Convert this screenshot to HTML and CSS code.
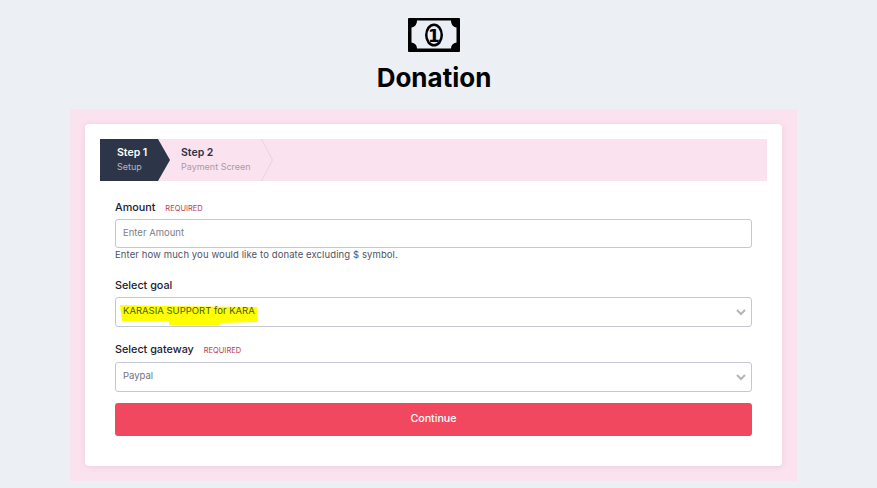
FILE: index.html
```html
<!DOCTYPE html>
<html lang="en">
<head>
    <meta charset="UTF-8">
    <title>Donation</title>
    <link rel="stylesheet" href="styles.css">
</head>
<body>
    <header class="page-head">
        <svg class="bill" viewBox="0 0 52 34" width="52" height="34" aria-hidden="true">
            <rect width="52" height="34" rx="1" fill="#000"/>
            <path d="M9 2.5H43C43 6 45 9 48.5 9.5V24.5C45 25 43 27 43 30.5H9C9 27 7 25 3.5 24.5V9.5C7 9 9 6 9 2.5Z" fill="#ebeef4"/>
            <ellipse cx="26" cy="17" rx="9" ry="11.5" fill="#000"/>
            <ellipse cx="26" cy="17" rx="6.5" ry="9" fill="#ebeef4"/>
            <text x="26" y="23.5" text-anchor="middle" class="bill-num">1</text>
        </svg>
        <h1>Donation</h1>
    </header>

    <main class="panel">
        <div class="card">
            <!-- Steps -->
            <div class="steps">
                <div class="step step-active">
                    <strong>Step 1</strong>
                    <span>Setup</span>
                </div>
                <div class="step">
                    <strong>Step 2</strong>
                    <span>Payment Screen</span>
                    <svg class="step-arrow" viewBox="0 0 12 42" width="12" height="42" aria-hidden="true">
                        <path d="M0.5 0L11.5 21L0.5 42" fill="none" stroke="#e6d3df"/>
                    </svg>
                </div>
            </div>

            <form class="form">
                <div class="field field-amount">
                    <label class="label">Amount <small>REQUIRED</small></label>
                    <input class="control" type="text" placeholder="Enter Amount">
                    <p class="hint">Enter how much you would like to donate excluding $ symbol.</p>
                </div>

                <div class="field field-goal">
                    <label class="label">Select goal</label>
                    <div class="control select">
                        <span class="marked">
                            <!-- marker scribble over the selected goal -->
                            <svg class="scribble" viewBox="0 0 138 22" width="138" height="22" aria-hidden="true">
                                <path d="M0 1L40 2L137 3L138 18L100 19L100 21L49 21L49 18L35 17L2 17Z" fill="#ffff00"/>
                            </svg>
                            <span class="marked-text">KARASIA SUPPORT for KARA</span>
                        </span>
                        <svg class="chevron" viewBox="0 0 12 8" width="12" height="8" aria-hidden="true">
                            <path d="M2 2L6 6L10 2" fill="none" stroke="#b3b5ba" stroke-width="2"/>
                        </svg>
                    </div>
                </div>

                <div class="field field-gateway">
                    <label class="label">Select gateway <small>REQUIRED</small></label>
                    <div class="control select">
                        <span>Paypal</span>
                        <svg class="chevron" viewBox="0 0 12 8" width="12" height="8" aria-hidden="true">
                            <path d="M2 2L6 6L10 2" fill="none" stroke="#b3b5ba" stroke-width="2"/>
                        </svg>
                    </div>
                </div>

                <button class="btn" type="button">Continue</button>
            </form>
        </div>
    </main>
</body>
</html>
```

FILE: styles.css
```css
* {
    box-sizing: border-box;
    margin: 0;
    padding: 0;
}

body {
    font-family: Inter, 'Liberation Sans', sans-serif;
    background: #eceff4;
    color: #181c32;
    height: 488px;
    overflow: hidden;
    padding: 18px 80px 0 70px;
}

.page-head {
    display: flex;
    flex-direction: column;
    align-items: center;
    height: 91px;
}

.bill {
    display: block;
    margin-left: 1px;
}

.bill-num {
    font-family: 'DejaVu Sans', sans-serif;
    font-size: 17px;
    font-weight: 700;
    fill: #000;
}

h1 {
    font-size: 26px;
    font-weight: 700;
    line-height: 32px;
    margin-top: 10px;
    margin-left: 1px;
    color: #000;
}

.panel {
    background: #fbe2ef;
    padding: 15px;
    height: 372px;
}

.card {
    background: #fff;
    height: 342px;
    padding: 15px;
    border-radius: 4px;
    box-shadow: 0 1px 6px rgba(120, 80, 110, 0.12);
}

/* Steps */
.steps {
    display: flex;
    height: 42px;
    background: #fbe2ef;
}

.step {
    position: relative;
    width: 103px;
    padding: 6px 0 0 11px;
    font-size: 10px;
    line-height: 15px;
}

.step strong {
    display: block;
    font-size: 10.5px;
    font-weight: 600;
    color: #2b3346;
}

.step span {
    display: block;
    font-size: 9px;
    line-height: 14px;
    color: #a99aa8;
}

.step-active {
    width: 70px;
    padding-left: 17px;
    background: #2d3648;
    clip-path: polygon(0 0, 58px 0, 70px 50%, 58px 100%, 0 100%);
}

.step-active strong {
    color: #fff;
}

.step-active span {
    color: #b4b8c1;
}

.step-arrow {
    position: absolute;
    top: 0;
    right: 0;
}

/* Form */
.form {
    padding: 0 15px;
}

.label {
    display: block;
    font-size: 10.8px;
    font-weight: 500;
    line-height: 14px;
    color: #1c2033;
}

.label small {
    font-size: 7.5px;
    font-weight: 400;
    color: #b8404f;
    margin-left: 7px;
}

.control {
    display: block;
    width: 100%;
    height: 29px;
    padding: 0 7px 2px;
    border: 1px solid #c5c8d2;
    border-radius: 3px;
    background: #fff;
    font-family: inherit;
    font-size: 9.5px;
    color: #6f7380;
}

.control::placeholder {
    color: #7d808b;
    opacity: 1;
}

.hint {
    font-size: 9.5px;
    line-height: 14px;
    color: #4f5364;
    letter-spacing: 0.1px;
}

.select {
    display: flex;
    align-items: center;
    justify-content: space-between;
    height: 30px;
    padding-right: 4px;
    padding-bottom: 3px;
}

.field-amount {
    padding-top: 20px;
}

.field-amount .label {
    margin-bottom: 3px;
}

.field-goal {
    margin-top: 17px;
}

.field-goal .label {
    margin-bottom: 4px;
}

.field-gateway {
    margin-top: 16px;
}

.field-gateway .label {
    margin-bottom: 4px;
}

.marked {
    position: relative;
}

.marked-text {
    position: relative;
    color: #4d5a1c;
}

.scribble {
    position: absolute;
    left: -3px;
    top: -1px;
}

.chevron {
    margin-top: 2px;
}

.btn {
    display: block;
    width: 100%;
    height: 33px;
    margin-top: 11px;
    padding-bottom: 2px;
    border: 0;
    border-radius: 3px;
    background: #f2485f;
    color: #fff;
    font-family: inherit;
    font-size: 10.7px;
    font-weight: 500;
}
```
